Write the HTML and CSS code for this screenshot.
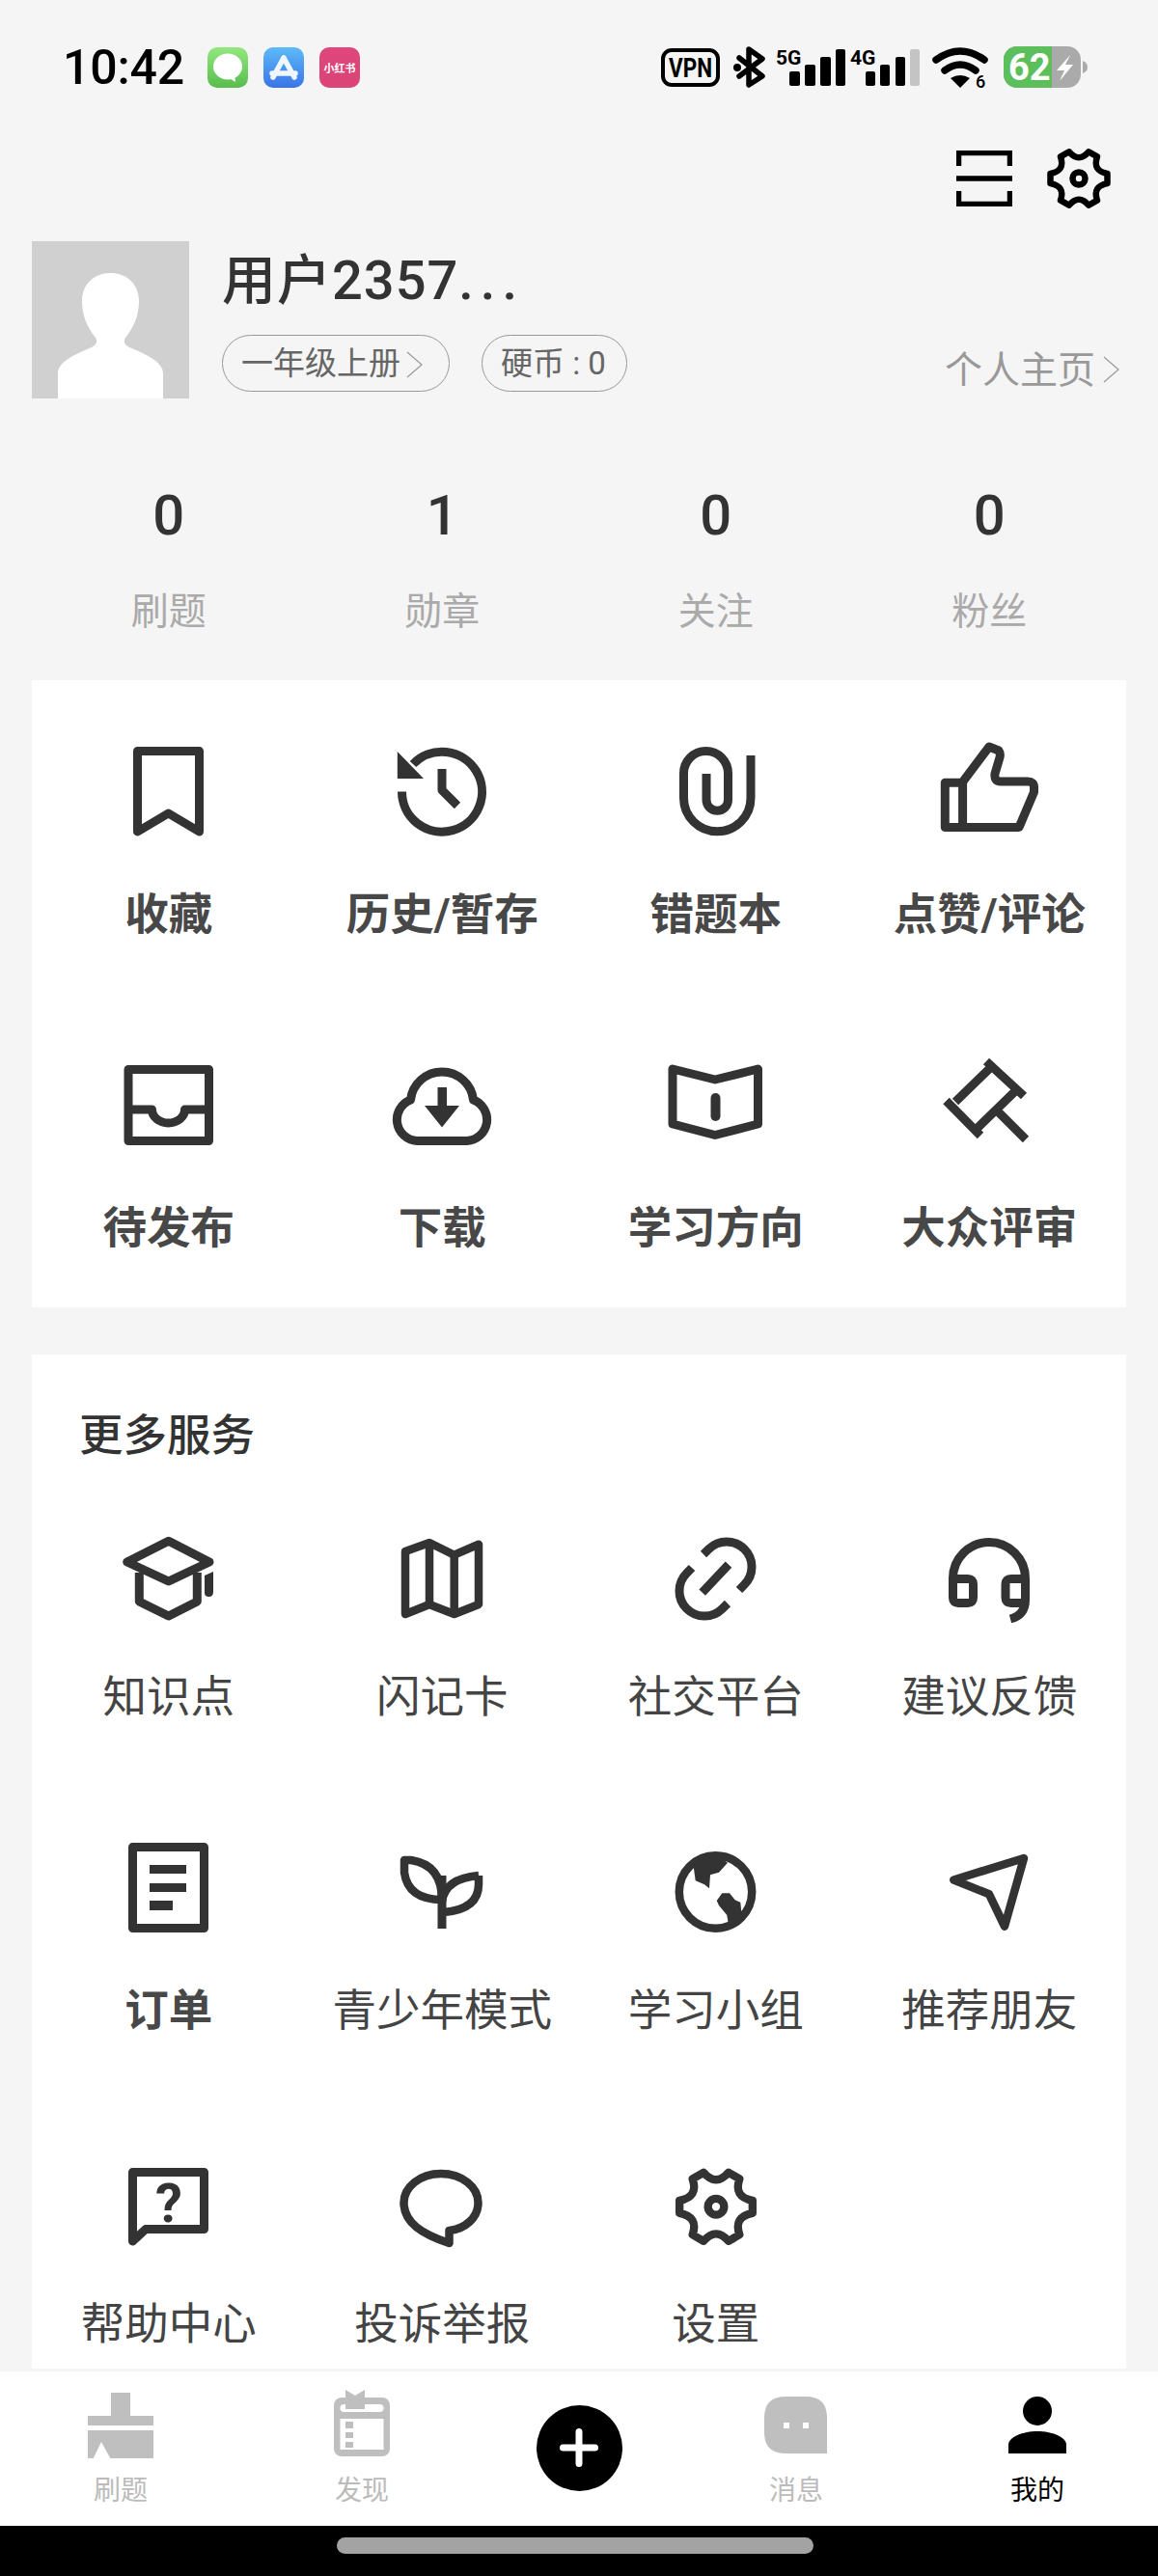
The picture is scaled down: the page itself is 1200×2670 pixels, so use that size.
FILE: index.html
```html
<!DOCTYPE html>
<html lang="zh">
<head>
<meta charset="utf-8">
<title>我的</title>
<link rel="stylesheet" href="styles.css">
</head>
<body>
<div class="page">
  <div class="status">
    <span class="time">10:42</span>
    <svg class="app" viewBox="0 0 42 42"><defs><linearGradient id="gg" x1="0" y1="0" x2="0" y2="1"><stop offset="0" stop-color="#93e87f"/><stop offset="1" stop-color="#58bd4d"/></linearGradient></defs><rect width="42" height="42" rx="10" fill="url(#gg)"/><ellipse cx="21" cy="20" rx="15" ry="13.5" fill="#fff"/><path d="M21 31l8 5-1-8z" fill="#fff"/></svg>
    <svg class="app" viewBox="0 0 42 42"><defs><linearGradient id="bg" x1="0" y1="0" x2="0" y2="1"><stop offset="0" stop-color="#5dbaf8"/><stop offset="1" stop-color="#3a74e8"/></linearGradient></defs><rect width="42" height="42" rx="10" fill="url(#bg)"/><path class="a-line" d="M21 11L10 31M21 11L32 31M9 27H33"/></svg>
    <svg class="app" viewBox="0 0 42 42"><defs><linearGradient id="pg" x1="0" y1="0" x2="0" y2="1"><stop offset="0" stop-color="#e0467c"/><stop offset="1" stop-color="#da4476"/></linearGradient></defs><rect width="42" height="42" rx="10" fill="url(#pg)"/><text class="xhs" x="21" y="26" text-anchor="middle">小红书</text></svg>
    <svg class="sys" viewBox="682 44 445 50">
      <rect class="vpn-box" x="687" y="51" width="57" height="36" rx="9"/>
      <text class="vpn" x="693" y="79" textLength="45" lengthAdjust="spacingAndGlyphs">VPN</text>
      <path class="bt" d="M766 59L790 78L776 87V50L790 60L766 78"/><circle cx="764" cy="69" r="4"/>
      <text class="net" x="804" y="66">5G</text>
      <rect x="818" y="73" width="11" height="15" rx="2"/><rect x="834" y="66" width="11" height="22" rx="2"/><rect x="850" y="58" width="11" height="30" rx="2"/><rect x="866" y="50" width="10" height="38" rx="2"/>
      <text class="net" x="881" y="66">4G</text>
      <rect x="897" y="73" width="10" height="15" rx="2"/><rect x="912" y="66" width="10" height="22" rx="2"/><rect x="928" y="58" width="10" height="30" rx="2"/><rect class="off" x="943" y="50" width="10" height="38" rx="2"/>
      <path class="wf" d="M970 61Q995 43 1020 61"/><path class="wf" d="M979 72Q995 60 1011 72"/><path d="M985 80Q995 74 1005 80L995 90Z"/>
      <text class="six" x="1011" y="90">6</text>
      <rect class="bat" x="1040" y="47" width="80" height="43" rx="14"/>
      <path class="bat-on" d="M1090 47H1054a14 14 0 0 0-14 14V76a14 14 0 0 0 14 14H1090Z"/>
      <path class="bat" d="M1122 62Q1127 64 1127 68.5Q1127 73 1122 75Z"/>
      <text class="pct" x="1045" y="82">62</text>
      <path class="bolt" d="M1109 56L1095 72H1103L1098 83L1112 66H1104Z"/>
    </svg>
  </div>

  <div class="actions">
    <svg class="act-scan" viewBox="0 0 58 58"><path d="M2.5 16V2.5H55.5V16M0 29H58M2.5 42V55.5H55.5V42"/></svg>
    <svg class="act-gear" viewBox="-33 -31 66 62"><use href="#gear"/></svg>
  </div>

  <div class="profile">
    <svg class="avatar" viewBox="0 0 163 163"><path d="M27 163V137C27 125 45 117 62 110C68 107 68 103 66 100C58 90 52 78 52 62C52 45 64 33 81.500 33C99 33 111 45 111 62C111 78 105 90 97 100C95 103 95 107 101 110C118 117 136 125 136 137V163Z"/></svg>
    <div class="info">
      <div class="name">用户2357<span class="dots">...</span></div>
      <div class="pills">
        <span class="pill grade">一年级上册<svg class="chev" viewBox="0 0 17 28"><path d="M1 1L16 14L1 27"/></svg></span>
        <span class="pill coin">硬币 : 0</span>
      </div>
    </div>
    <a class="home">个人主页<svg class="chev" viewBox="0 0 17 28"><path d="M1 1L16 14L1 27"/></svg></a>
  </div>

  <div class="stats">
    <div class="stat"><div class="num">0</div><div class="cap">刷题</div></div>
    <div class="stat"><div class="num">1</div><div class="cap">勋章</div></div>
    <div class="stat"><div class="num">0</div><div class="cap">关注</div></div>
    <div class="stat"><div class="num">0</div><div class="cap">粉丝</div></div>
  </div>

  <section class="card main">
    <div class="grid grid-main">
      <div class="cell"><svg class="ico" viewBox="0 0 100 100"><path d="M17.500 6.500H81.500V90L49.500 71L17.500 90Z"/></svg><span class="lbl strong">收藏</span></div>
      <div class="cell"><svg class="ico" viewBox="0 0 100 100"><path d="M8.500 48.600A41.500 41.500 0 1 0 20 20"/><path class="fill" d="M3.800 7V35H31Z"/><path d="M50 25V47L66 63"/></svg><span class="lbl strong">历史/暂存</span></div>
      <div class="cell"><svg class="ico" viewBox="0 0 100 100"><path d="M86 11V55A34.750 34.750 0 0 1 16.500 55V29.500A23 23 0 0 1 62.500 29.500V57A11.250 11.250 0 0 1 40 57V30"/></svg><span class="lbl strong">错题本</span></div>
      <div class="cell"><svg class="ico" viewBox="0 0 100 100"><path d="M4.300 39.300H22L50 2L60 6Q62 9 61 13L56 30Q55 38 62 38H90Q96.500 38 96.500 44V49L81 85.500H4.300Z"/><path d="M22.600 39V85"/></svg><span class="lbl strong">点赞/评论</span></div>
      <div class="cell"><svg class="ico" viewBox="0 0 100 100"><path d="M8 11.500H91.500V85.500H8Z"/><path d="M8 53H32.500A17 14 0 0 0 66.500 53H91"/></svg><span class="lbl strong">待发布</span></div>
      <div class="cell"><svg class="ico" viewBox="0 0 100 100"><path d="M24 85.500A22 22 0 0 1 17.500 43A32.700 32.700 0 0 1 82.500 43A22 22 0 0 1 76 85.500Z"/><path class="fill" d="M45.500 30H55V49H68L50 71.500L32 49H45.500Z"/></svg><span class="lbl strong">下载</span></div>
      <div class="cell"><svg class="ico" viewBox="0 0 100 100"><path d="M5 11L49 22L93.500 11V68L49 79.500L5 68Z"/><path class="round" d="M49.500 41V60"/></svg><span class="lbl strong">学习方向</span></div>
      <div class="cell"><svg class="ico" viewBox="0 0 100 100"><path class="butt" d="M47 3L86 39M5.500 44L41 80M52 9L15 45M76 35L38 72M59 55L88 84"/></svg><span class="lbl strong">大众评审</span></div>
    </div>
  </section>

  <section class="card more">
    <h2 class="title">更多服务</h2>
    <div class="grid grid-more">
      <div class="cell"><svg class="ico" viewBox="0 0 100 100"><path d="M49.700 11.300L6.700 33L49.700 53L92 33Z"/><path d="M19.300 44V74L49.700 89L79.300 74V44"/><path class="fill-only" d="M87 47L96 43V64Q96 69 91.500 69Q87 69 87 65Z"/></svg><span class="lbl">知识点</span></div>
      <div class="cell"><svg class="ico" viewBox="0 0 100 100"><path class="thin" d="M12 22L37 13L62.700 25.700L88 14.700V77L62.700 87L37 77L12 87Z"/><path class="thin" d="M37 13V77M62.700 26V87"/></svg><span class="lbl">闪记卡</span></div>
      <div class="cell"><svg class="ico" viewBox="0 0 100 100"><path class="butt" d="M63 35.700L35.700 64.700M37 25L42.600 19.600A26 26 0 0 1 79.400 56.400L74 62M62 76L56.400 81.400A26 26 0 0 1 19.600 44.600L25 39"/></svg><span class="lbl">社交平台</span></div>
      <div class="cell"><svg class="ico" viewBox="0 0 100 100"><path class="butt" d="M12.500 62V50A37.500 37.500 0 0 1 87.500 50V72Q87.500 88 72 92"/><path d="M12.500 50.500H28Q33.500 50.500 33.500 56V70Q33.500 75.500 28 75.500H18Q12.500 75.500 12.500 70V50.500Z"/><path d="M87.500 50.500H72.500Q67 50.500 67 56V70Q67 75.500 72.500 75.500H87.500"/></svg><span class="lbl">建议反馈</span></div>
      <div class="cell"><svg class="ico" viewBox="0 0 100 100"><path d="M12.500 3.500H86.500V87.500H12.500Z"/><path class="fill-only" d="M30 22H68V31H30ZM30 41H68V50H30ZM30 59H54V69H30Z"/></svg><span class="lbl strong">订单</span></div>
      <div class="cell"><svg class="ico" viewBox="0 0 100 100"><path class="butt" d="M50 33V88"/><path class="thin" d="M11 17H18Q50 22 50 58Q15 58 11 30Z"/><path class="thin" d="M88 33Q53 36 50 60M88 33V42Q88 68 52 71"/></svg><span class="lbl">青少年模式</span></div>
      <div class="cell"><svg class="ico" viewBox="0 0 100 100"><circle class="thin" cx="49.500" cy="50" r="37.700"/><path class="fill-only" d="M26.300 20.700L28.700 38.300L38 42.300L43 46.300L44 32.300L53 29.700L62 19.700L51.300 12.300L34.700 14Z"/><path class="fill-only" d="M50.700 59L56.300 51.300H64L69.700 58.300L75.300 60.700L76.300 70.700L71 82L63 84L61.300 74L53 64Z"/></svg><span class="lbl">学习小组</span></div>
      <div class="cell"><svg class="ico" viewBox="0 0 100 100"><path class="thin" d="M86 15L13.300 37.500L50 52.300L66 85.700Z"/></svg><span class="lbl">推荐朋友</span></div>
      <div class="cell"><svg class="ico" viewBox="0 0 100 100"><path d="M12.500 15.500H86.500V74.500H26L12.500 87Z"/><text class="qm" x="50" y="67" text-anchor="middle">?</text></svg><span class="lbl">帮助中心</span></div>
      <div class="cell"><svg class="ico" viewBox="0 0 100 100"><path class="thin" d="M49 17C71 17 87.500 31 87.500 47C87.500 63 74 74 57.500 76V89C30 80 10.500 68 10.500 47C10.500 31 27 17 49 17Z"/></svg><span class="lbl">投诉举报</span></div>
      <div class="cell"><svg class="ico" viewBox="-39 -40 78 78"><use href="#gear"/></svg><span class="lbl">设置</span></div>
    </div>
  </section>

  <nav class="tabs">
    <div class="tab"><svg class="tab-ico" viewBox="0 0 100 80"><path d="M40 4H60V28H84V38H16V28H40ZM16 43H84V72H39.300L30 55L21.700 72H16Z"/></svg><span class="tab-lbl">刷题</span></div>
    <div class="tab"><svg class="tab-ico" viewBox="0 0 100 80"><rect x="21" y="9" width="58" height="61" rx="8"/><rect class="hole" x="27.500" y="31" width="45" height="32"/><rect class="hole" x="27.500" y="16" width="45" height="8" rx="4"/><path d="M33 1L43 7L53 1V21H33ZM33 34H41V41H33ZM33 45H41V51H33ZM33 55H41V61H33Z"/></svg><span class="tab-lbl">发现</span></div>
    <div class="tab plus-cell"><span class="plus"><svg class="plus-ico" viewBox="0 0 40 40"><path d="M20 3.500V36.500M3.500 20H36.500"/></svg></span></div>
    <div class="tab"><svg class="tab-ico" viewBox="0 0 100 80"><path d="M39 8H60Q82 8 82 30V67H39Q17 67 17 45V30Q17 8 39 8Z"/><rect class="hole" x="37" y="35" width="6" height="6"/><rect class="hole" x="57" y="35" width="6" height="6"/></svg><span class="tab-lbl">消息</span></div>
    <div class="tab on"><svg class="tab-ico" viewBox="0 0 100 80"><circle cx="50" cy="23" r="15"/><path d="M20 67V58C20 50 35 44 50 44C65 44 80 50 80 58V67Z"/></svg><span class="tab-lbl">我的</span></div>
  </nav>
  <div class="homebar"><span class="handle"></span></div>
</div>

<svg class="defs" width="0" height="0"><defs><g id="gear"><path class="gear-out" d="M29.500-5.100L29.500 5.100Q13.900 8 19 22.600L10.100 27.700Q0 16-10.100 27.700L-19 22.600Q-13.900 8-29.500 5.100L-29.500-5.100Q-13.900-8-19-22.600L-10.100-27.700Q0-16 10.100-27.700L19-22.600Q13.900-8 29.500-5.100Z"/><circle class="gear-out" cx="0" cy="0" r="6.500"/></g></defs></svg>
</body>
</html>
```
FILE: styles.css
```css
* { box-sizing: border-box; }
html, body { margin: 0; padding: 0; }
body { background: #f5f5f5; font-family: Roboto, "Noto Sans CJK SC", sans-serif; color: #333; }
.page { width: 1200px; height: 2670px; overflow: hidden; display: flex; flex-direction: column; background: #f5f5f5; }
.defs { position: absolute; }

/* status bar */
.status { display: flex; align-items: center; height: 42px; margin-top: 49px; padding: 0 73px 0 65px; }
.time { font-size: 50px; font-weight: 500; color: #000; line-height: 42px; margin-right: 24px; letter-spacing: -0.2px; }
.app { width: 42px; height: 42px; margin-right: 16px; flex: none; }
.a-line { fill: none; stroke: #fff; stroke-width: 5.5; stroke-linecap: round; opacity: .92; }
.xhs { font-size: 11px; font-weight: 700; fill: #fff; }
.sys { width: 445px; height: 50px; margin-left: auto; margin-right: 0; flex: none; overflow: visible; }
.vpn-box { fill: none; stroke: #000; stroke-width: 4; }
.vpn { font-size: 27px; font-weight: 700; }
.bt { fill: none; stroke: #000; stroke-width: 5.5; stroke-linejoin: round; stroke-linecap: round; }
.net { font-size: 21px; font-weight: 700; }
.off { fill: #c4c4c4; }
.wf { fill: none; stroke: #000; stroke-width: 7.500; stroke-linecap: round; }
.six { font-size: 18px; font-weight: 500; }
.bat { fill: #aaaaaa; }
.bat-on { fill: #5dbf5b; }
.pct { font-size: 38px; font-weight: 700; fill: #fff; }
.bolt { fill: #fff; }

/* top actions */
.actions { display: flex; justify-content: flex-end; align-items: center; gap: 36px; height: 62px; margin-top: 63px; padding-right: 49px; color: #000; }
.act-scan { width: 58px; height: 58px; }
.act-scan path { fill: none; stroke: #000; stroke-width: 5.500; }
.act-gear { width: 66px; height: 62px; overflow: visible; color: #000; }
.gear-out { fill: none; stroke: currentColor; stroke-width: 6.500; stroke-linejoin: round; }

/* profile */
.profile { display: flex; height: 163px; margin-top: 34px; padding: 0 40px 0 33px; }
.avatar { width: 163px; height: 163px; background: #d0d0d0; flex: none; }
.avatar path { fill: #fff; }
.info { flex: 1; margin-left: 34px; padding-top: 6px; }
.name { font-size: 56px; line-height: 70px; font-weight: 500; color: #333; letter-spacing: 1px; }
.dots { letter-spacing: 7px; }
.pills { display: flex; gap: 33px; margin-top: 21px; }
.pill { display: flex; align-items: center; height: 59px; border: 1px solid #999; border-radius: 30px; font-size: 33px; line-height: 55px; color: #666; padding: 0 0 1px 19px; }
.grade { width: 236px; }
.coin { width: 151px; white-space: nowrap; }
.chev { width: 17px; height: 28px; margin-left: 6px; margin-top: 4px; flex: none; }
.chev path { fill: none; stroke: #999; stroke-width: 1.200; }
.home { display: flex; align-items: center; align-self: flex-end; height: 50px; margin-bottom: 8px; font-size: 39px; color: #999; }
.home .chev { margin-left: 8px; margin-top: 6px; }

/* stats */
.stats { display: grid; grid-template-columns: repeat(4, 1fr); margin: 86px 33px 0; }
.stat { text-align: center; }
.num { font-size: 58px; line-height: 70px; font-weight: 500; color: #333; }
.cap { font-size: 39px; line-height: 50px; margin-top: 40px; color: #aaa; }

/* cards */
.card { background: #fff; margin: 0 33px; }
.main { margin-top: 46px; height: 650px; padding-top: 67px; }
.more { margin-top: 49px; height: 1051px; padding-top: 55px; }
.title { margin: 0 0 67px 49px; font-size: 45.500px; line-height: 60px; font-weight: 500; color: #333; }
.grid { display: grid; grid-template-columns: repeat(4, 1fr); }
.grid-main { row-gap: 118px; }
.grid-main .lbl { margin-top: 47px; }
.grid-more { row-gap: 121px; }
.grid-more .lbl { margin-top: 44px; }
.cell { display: flex; flex-direction: column; align-items: center; }
.lbl { font-size: 45.500px; line-height: 60px; color: #444; white-space: nowrap; }
.strong { font-weight: 700; color: #484848; }

.ico { width: 100px; height: 100px; overflow: visible; color: #333; flex: none; }
.ico path, .ico circle { fill: none; stroke: #333; stroke-width: 9; stroke-linejoin: round; }
.ico .butt { stroke-linecap: butt; }
.ico .round { stroke-linecap: round; stroke-width: 10; }
.ico .thin { stroke-width: 8.500; }
.ico .fill { fill: #333; stroke: none; }
.ico .fill-only { fill: #333; stroke: none; }
.ico .gear-out { stroke-width: 6.500; }
.qm { font-size: 56px; font-weight: 700; fill: #333; }

/* tabs */
.tabs { display: grid; grid-template-columns: 1fr 1fr 200px 1fr 1fr; height: 160px; margin-top: 3px; background: #fff; flex: none; }
.tab { display: flex; flex-direction: column; align-items: center; padding-top: 18px; }
.tab-ico { width: 100px; height: 80px; fill: #bfbfbf; flex: none; }
.tab-ico .hole { fill: #fff; }
.tab-lbl { font-size: 28px; line-height: 40px; margin-top: 6px; color: #bbb; }
.on .tab-ico { fill: #000; }
.on .tab-lbl { color: #000; }
.plus-cell { padding: 0 0 2px; justify-content: center; }
.plus { display: flex; align-items: center; justify-content: center; width: 89px; height: 89px; border-radius: 50%; background: #000; }
.plus-ico { width: 40px; height: 40px; }
.plus-ico path { fill: none; stroke: #fff; stroke-width: 7; stroke-linecap: round; }
.homebar { flex: none; height: 52px; background: #000; display: flex; justify-content: center; padding: 12px 8px 0 0; }
.handle { width: 494px; height: 17px; border-radius: 9px; background: #a3a3a3; }
```
